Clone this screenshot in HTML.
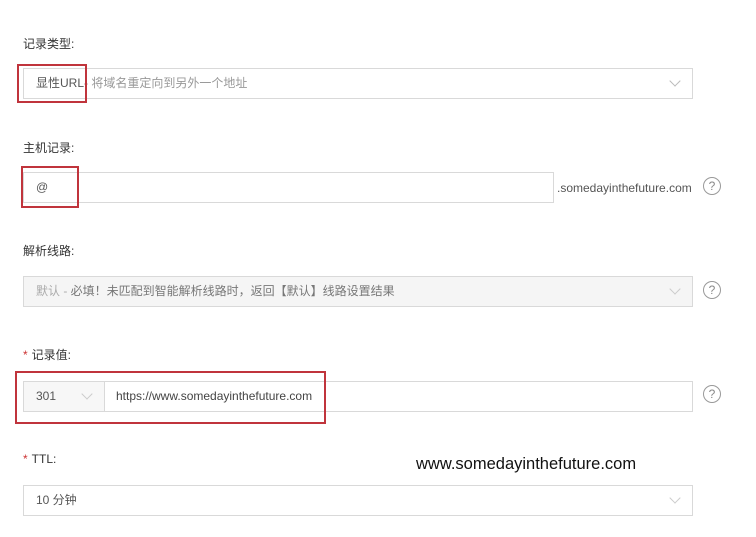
<!DOCTYPE html><html><head><meta charset="utf-8"><style>
body{margin:0;width:756px;height:537px;background:#fff;position:relative;overflow:hidden;font-family:"Liberation Sans","Noto Sans CJK SC",sans-serif;font-size:12px;color:#333}
.a{position:absolute}
.lbl{position:absolute;left:23px;font-size:12px;color:#333;line-height:14px}
.star{color:#c33;margin-right:4px}
.box{position:absolute;border:1px solid #d9d9d9;box-sizing:border-box;background:#fff}
.t{position:absolute;top:0;line-height:29px;font-size:12px}
.chev{position:absolute;width:7px;height:7px;border-right:1px solid #bbb;border-bottom:1px solid #bbb;transform:rotate(45deg)}
.red{position:absolute;border:2px solid #c0343c;box-sizing:border-box}
.q{position:absolute;width:18px;height:18px;border:1.2px solid #999;border-radius:50%;box-sizing:border-box;color:#888;font-size:12px;line-height:16px;text-align:center}
</style></head><body>
<div class="lbl" style="top:37px">记录类型:</div>
<div class="box" style="left:23px;top:68px;width:670px;height:31px"><span class="t" style="left:12px;color:#555">显性URL- <span style="color:#999">将域名重定向到另外一个地址</span></span><div class="chev" style="left:647px;top:8px"></div></div>
<div class="red" style="left:17px;top:64px;width:70px;height:39px"></div>

<div class="lbl" style="top:141px">主机记录:</div>
<div class="box" style="left:23px;top:172px;width:531px;height:31px"><span class="t" style="left:12px;color:#555">@</span></div>
<div class="a" style="left:557px;top:181px;font-size:12px;color:#555">.somedayinthefuture.com</div>
<div class="q" style="left:703px;top:177px">?</div>
<div class="red" style="left:21px;top:166px;width:58px;height:42px"></div>

<div class="lbl" style="top:244px">解析线路:</div>
<div class="box" style="left:23px;top:276px;width:670px;height:31px;background:#f5f5f5"><span class="t" style="left:12px;color:#aaa">默认 - <span style="color:#777">必填！未匹配到智能解析线路时，返回【默认】线路设置结果</span></span><div class="chev" style="left:647px;top:8px;border-color:#ccc"></div></div>
<div class="q" style="left:703px;top:281px">?</div>

<div class="lbl" style="top:348px"><span class="star">*</span>记录值:</div>
<div class="box" style="left:23px;top:381px;width:670px;height:31px"></div>
<div class="box" style="left:23px;top:381px;width:82px;height:31px;background:#f7f7f7"><span class="t" style="left:12px;color:#555">301</span><div class="chev" style="left:59px;top:8px;border-color:#ccc"></div></div>
<span class="a" style="left:116px;top:382px;line-height:29px;color:#444">https://www.somedayinthefuture.com</span>
<div class="q" style="left:703px;top:385px">?</div>
<div class="red" style="left:15px;top:371px;width:311px;height:53px"></div>

<div class="lbl" style="top:452px"><span class="star">*</span>TTL:</div>
<div class="a" style="left:416px;top:455px;font-size:16.5px;color:#111">www.somedayinthefuture.com</div>
<div class="box" style="left:23px;top:485px;width:670px;height:31px"><span class="t" style="left:12px;color:#555">10 分钟</span><div class="chev" style="left:647px;top:8px;border-color:#ccc"></div></div>
</body></html>
